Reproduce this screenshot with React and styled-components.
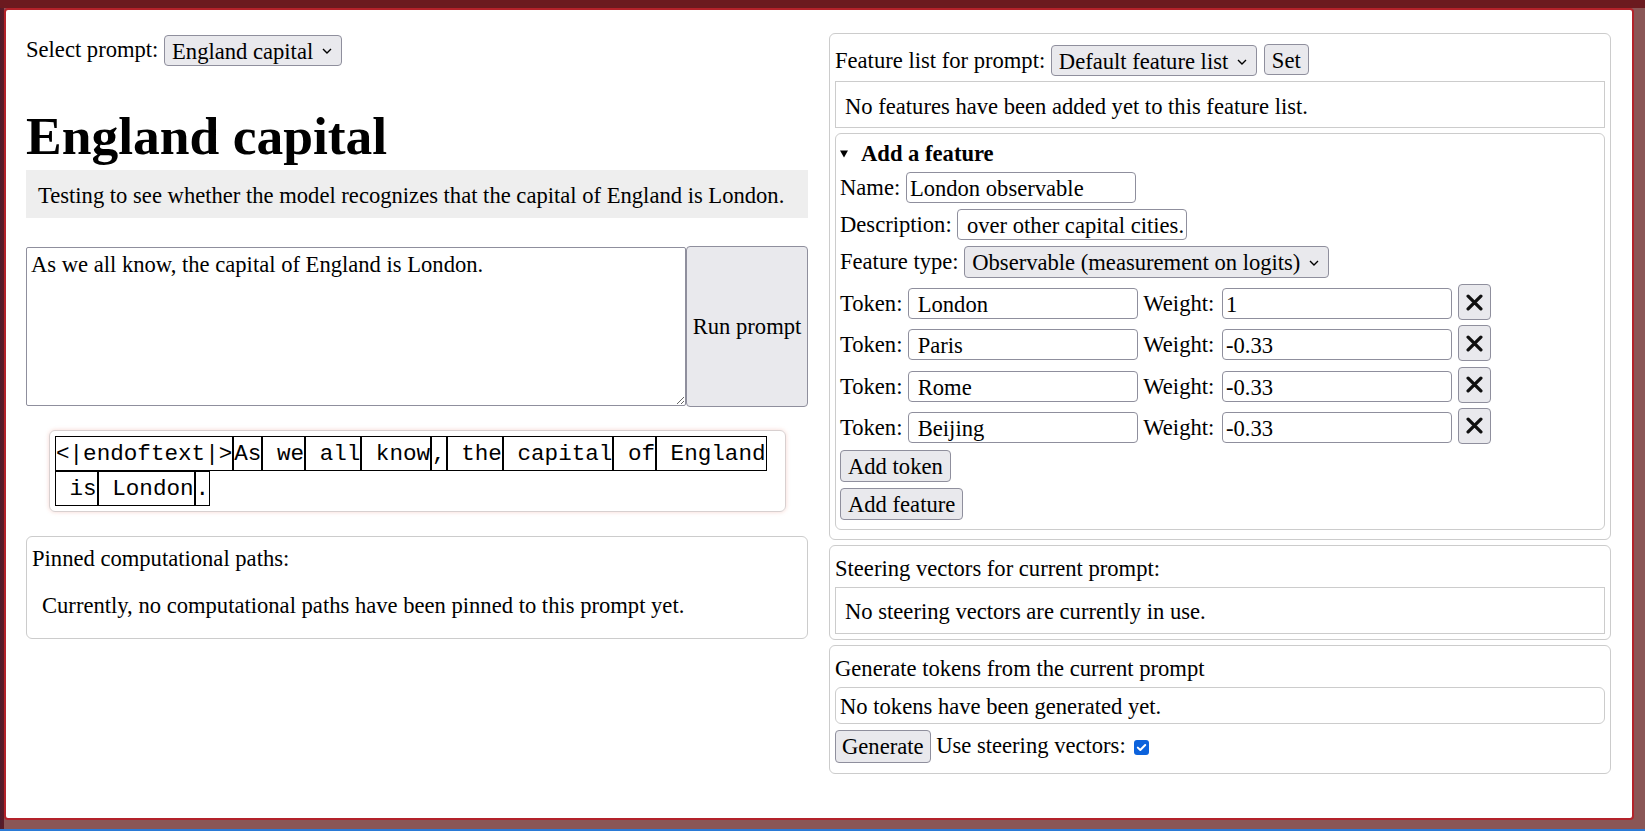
import React from 'react';
import styled, { createGlobalStyle } from 'styled-components';

const GlobalStyle = createGlobalStyle`
  html, body {
    margin: 0;
    padding: 0;
  }
  body {
    font-family: "Liberation Serif", "Times New Roman", serif;
    font-size: 22.6px;
    color: #000;
    background: #8a5656;
  }
  * { box-sizing: border-box; }
`;

const Screen = styled.div`
  height: 831px;
  padding: 8px 11px 0 4px;
  background:
    linear-gradient(180deg, #6b1a1f 0, #6b1a1f 8px, transparent 8px),
    linear-gradient(90deg, #4f1d2d 0, #5e1b26 4px, #8a5656 4px);
  border-bottom: 2px solid #2a7ad6;
`;

const Frame = styled.div`
  height: 812px;
  background: #fff;
  border: 2px solid #b3222a;
  border-radius: 4px;
  padding: 24px 21px 0 20px;
`;

const Columns = styled.div`
  display: grid;
  grid-template-columns: 782px 782px;
  column-gap: 21px;
  align-items: start;
`;

const Column = styled.div`
  display: flex;
  flex-direction: column;
  margin-top: ${(p) => p.$shift || 0}px;
`;

const InlineRow = styled.div`
  display: flex;
  align-items: center;
  white-space: pre;
  height: ${(p) => p.$h || 31}px;
  padding-top: ${(p) => p.$pt || 0}px;
`;

const SelectWrap = styled.span`
  position: relative;
  display: inline-flex;
`;

const Select = styled.select`
  appearance: none;
  font: inherit;
  color: #000;
  height: ${(p) => p.$h || 31}px;
  padding: 2px 27px 0 7px;
  background: #e9e9ed;
  border: 1px solid #8f8f9d;
  border-radius: 4px;
`;

const Chevron = styled.svg`
  position: absolute;
  right: 10px;
  top: 50%;
  margin-top: -2px;
  pointer-events: none;
`;

const Button = styled.button`
  font: inherit;
  color: #000;
  height: ${(p) => p.$h || 32}px;
  margin-left: ${(p) => p.$ml || 0}px;
  padding: 2px ${(p) => p.$px || 7}px 0;
  background: #e9e9ed;
  border: 1px solid #8f8f9d;
  border-radius: 4px;
  align-self: flex-start;
`;

const TextInput = styled.input`
  font: inherit;
  color: #000;
  width: 230px;
  height: 31px;
  padding: 3px 3px 0;
  border: 1px solid #8f8f9d;
  border-radius: 4px;
  background: #fff;
`;

const Title = styled.h1`
  margin: 41px 0 2px;
  font-size: 53.5px;
  line-height: 61.5px;
  font-weight: bold;
`;

const Description = styled.div`
  background: #eeeeee;
  padding: 13px 12px 9px;
  line-height: 26px;
`;

const PromptRow = styled.div`
  margin-top: 28px;
  display: flex;
  align-items: center;
  height: 161px;
`;

const PromptArea = styled.textarea`
  font: inherit;
  color: #000;
  width: 660px;
  height: 159px;
  padding: 4px 4px;
  border: 1px solid #8f8f9d;
  border-radius: 2px;
  resize: both;
`;

const RunButton = styled(Button)`
  width: 122px;
  height: 161px;
  padding: 2px 0 0;
`;

const TokenBox = styled.div`
  margin: 23px 22px 0 23px;
  padding: 5px;
  border: 1px solid #d8d0d0;
  border-radius: 6px;
  box-shadow: 0 0 4px rgba(225, 110, 90, 0.28);
  display: flex;
  flex-wrap: wrap;
  font-family: "Liberation Mono", "Courier New", monospace;
  font-size: 22.6px;
`;

const Token = styled.span`
  white-space: pre;
  border: 1px solid #000;
  height: 35px;
  line-height: 34px;
`;

const Panel = styled.div`
  margin-top: ${(p) => p.$mt || 0}px;
  border: 1px solid #cccccc;
  border-radius: 6px;
  padding: ${(p) => p.$pad || '10px 5px 5px'};
  line-height: 26px;
`;

const PanelNote = styled.p`
  margin: 21px 0 19px 10px;
`;

const Notice = styled.div`
  margin-top: ${(p) => p.$mt || 0}px;
  border: 1px solid #cccccc;
  border-radius: ${(p) => (p.$rounded ? 6 : 0)}px;
  padding: ${(p) => p.$pad || '11.5px 9px 7.5px'};
`;

const Details = styled.details`
  margin-top: 5px;
  border: 1px solid #cccccc;
  border-radius: 6px;
  padding: 7px 4px 9px;
`;

const Summary = styled.summary`
  list-style: none;
  font-weight: bold;
  display: flex;
  align-items: center;
  height: 26px;
  margin-bottom: 5px;
  &::-webkit-details-marker { display: none; }
`;

const Fields = styled.div`
  display: flex;
  flex-direction: column;
  gap: 6px;
`;

const TokenRows = styled.div`
  display: flex;
  flex-direction: column;
  gap: 5.3px;
`;

const TokenRow = styled.div`
  display: flex;
  align-items: flex-end;
  white-space: pre;
  height: 36px;
  line-height: 32px;

  & > input {
    margin-bottom: 1px;
  }
  & > input + input {
    margin-left: 2px;
  }
`;

const XButton = styled.button`
  width: 33px;
  height: 36px;
  margin-left: 6px;
  padding: 0;
  display: flex;
  align-items: center;
  justify-content: center;
  background: #e9e9ed;
  border: 1px solid #8f8f9d;
  border-radius: 4px;
`;

const GenerateRow = styled.div`
  margin-top: 6px;
  display: flex;
  align-items: center;
  white-space: pre;
`;

const Check = styled.span`
  display: flex;
  width: 15px;
  height: 15px;
  margin: 3px 0 0 3px;
  background: #0c62dc;
  border-radius: 3px;

  & > svg {
    display: block;
  }
`;

const ChevronIcon = () => (
  <Chevron width="10" height="6" viewBox="0 0 10 6">
    <path d="M1 1 L5 5 L9 1" fill="none" stroke="#000" strokeWidth="1.4" />
  </Chevron>
);

const Dropdown = ({ value, h }) => (
  <SelectWrap>
    <Select $h={h} defaultValue={value}>
      <option>{value}</option>
    </Select>
    <ChevronIcon />
  </SelectWrap>
);

const CloseIcon = () => (
  <svg width="17" height="17" viewBox="0 0 16 16">
    <path d="M2 2 L14 14 M14 2 L2 14" stroke="#111" strokeWidth="3.1" strokeLinecap="round" />
  </svg>
);

const CheckIcon = () => (
  <Check role="checkbox" aria-checked="true">
    <svg width="15" height="15" viewBox="0 0 15 15">
      <path d="M3.8 7.6 L6.3 10 L11.2 5" fill="none" stroke="#fff" strokeWidth="2" strokeLinecap="round" strokeLinejoin="round" />
    </svg>
  </Check>
);

const tokens = ['<|endoftext|>', 'As', ' we', ' all', ' know', ',', ' the', ' capital', ' of', ' England', ' is', ' London', '.'];

const featureTokens = [
  { token: ' London', weight: '1' },
  { token: ' Paris', weight: '-0.33' },
  { token: ' Rome', weight: '-0.33' },
  { token: ' Beijing', weight: '-0.33' },
];

const App = () => {
  return (
    <>
      <GlobalStyle />
      <Screen>
        <Frame>
          <Columns>
            <Column>
              <InlineRow $pt={1}>
                Select prompt: <Dropdown value="England capital" />
              </InlineRow>
              <Title>England capital</Title>
              <Description>
                Testing to see whether the model recognizes that the capital of England is London.
              </Description>
              <PromptRow>
                <PromptArea defaultValue="As we all know, the capital of England is London." />
                <RunButton>Run prompt</RunButton>
              </PromptRow>
              <TokenBox>
                {tokens.map((t, i) => (
                  <Token key={i}>{t}</Token>
                ))}
              </TokenBox>
              <Panel $mt={24} $pad="9px 5px 0">
                Pinned computational paths:
                <PanelNote>Currently, no computational paths have been pinned to this prompt yet.</PanelNote>
              </Panel>
            </Column>

            <Column $shift={-1}>
              <Panel $pad="8px 5px 9px">
                <InlineRow $h={35} $pt={2}>
                  Feature list for prompt: <Dropdown value="Default feature list" />
                  <Button $h={31} $ml={7}>Set</Button>
                </InlineRow>
                <Notice $mt={4}>No features have been added yet to this feature list.</Notice>
                <Details open>
                  <Summary>
                    <svg width="8" height="8" viewBox="0 0 8 8" style={{ marginRight: 13 }}>
                      <path d="M0 0.5 H8 L4 7.5 Z" fill="#000" />
                    </svg>
                    Add a feature
                  </Summary>
                  <Fields>
                    <InlineRow>
                      Name: <TextInput defaultValue="London observable" />
                    </InlineRow>
                    <InlineRow>
                      Description: <TextInput defaultValue=" over other capital cities." />
                    </InlineRow>
                    <InlineRow $h={32}>
                      Feature type: <Dropdown value="Observable (measurement on logits)" h={32} />
                    </InlineRow>
                    <TokenRows>
                      {featureTokens.map((f, i) => (
                        <TokenRow key={i}>
                          Token: <TextInput defaultValue={f.token} /> Weight: <TextInput defaultValue={f.weight} />
                          <XButton aria-label="Remove token">
                            <CloseIcon />
                          </XButton>
                        </TokenRow>
                      ))}
                    </TokenRows>
                    <Button>Add token</Button>
                    <Button>Add feature</Button>
                  </Fields>
                </Details>
              </Panel>

              <Panel $mt={5}>
                Steering vectors for current prompt:
                <Notice $mt={5}>No steering vectors are currently in use.</Notice>
              </Panel>

              <Panel $mt={5} $pad="10px 5px 10px">
                Generate tokens from the current prompt
                <Notice $mt={5} $rounded $pad="6.5px 4px 2.5px">No tokens have been generated yet.</Notice>
                <GenerateRow>
                  <Button $h={33} $px={6}>Generate</Button> Use steering vectors: <CheckIcon />
                </GenerateRow>
              </Panel>
            </Column>
          </Columns>
        </Frame>
      </Screen>
    </>
  );
};

export default App;
